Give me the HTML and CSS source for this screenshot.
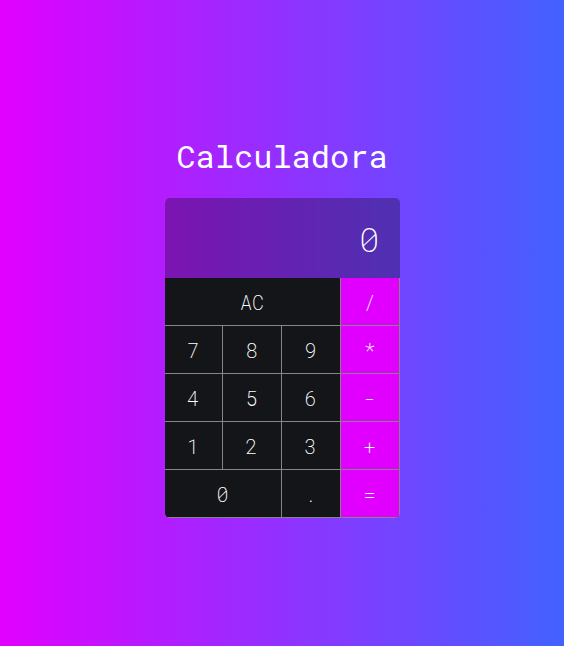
FILE: index.html
```html
<!DOCTYPE html>
<html lang="pt">
<head>
<meta charset="utf-8">
<title>Calculadora</title>
<link rel="stylesheet" href="styles.css">
</head>
<body>
<main class="page">
  <h1 class="title">Calculadora</h1>
  <div class="calc">
    <div class="display">0</div>
    <div class="keys">
      <button class="key span3">AC</button>
      <button class="key op">/</button>
      <button class="key">7</button>
      <button class="key">8</button>
      <button class="key">9</button>
      <button class="key op">*</button>
      <button class="key">4</button>
      <button class="key">5</button>
      <button class="key">6</button>
      <button class="key op">-</button>
      <button class="key">1</button>
      <button class="key">2</button>
      <button class="key">3</button>
      <button class="key op">+</button>
      <button class="key span2">0</button>
      <button class="key">.</button>
      <button class="key op">=</button>
    </div>
  </div>
</main>
</body>
</html>
```
FILE: styles.css
```css
* { box-sizing: border-box; }
html, body { margin: 0; padding: 0; }
body {
  min-height: 100vh;
  background: linear-gradient(to right, #e100ff, #4262ff);
  font-family: "Roboto Mono", "DejaVu Sans Mono", monospace;
}
.page {
  display: flex;
  flex-direction: column;
  align-items: center;
  padding-top: 135px;
}
.title {
  margin: 0 0 21px;
  font-size: 32px;
  font-weight: 400;
  line-height: 42px;
  color: #fff;
}
.calc {
  width: 235px;
  border-radius: 5px;
  overflow: hidden;
}
.display {
  height: 80px;
  display: flex;
  align-items: center;
  justify-content: flex-end;
  padding-right: 20px;
  background: rgba(0, 0, 0, 0.3);
  color: #fff;
  font-size: 34px;
  font-weight: 200;
}
.keys {
  display: grid;
  grid-template-columns: 57px 58px 58px 58px;
  grid-auto-rows: 47px;
  gap: 1px;
  padding: 0 1px 1px 0;
  background: #858585;
}
.key {
  border: 0;
  margin: 0;
  padding: 0;
  background: #141518;
  color: #fff;
  font-family: inherit;
  font-size: 20px;
  font-weight: 200;
}
.key.op { background: #e100ff; color: #fff; }
.span3 { grid-column: span 3; }
.span2 { grid-column: span 2; }
```
